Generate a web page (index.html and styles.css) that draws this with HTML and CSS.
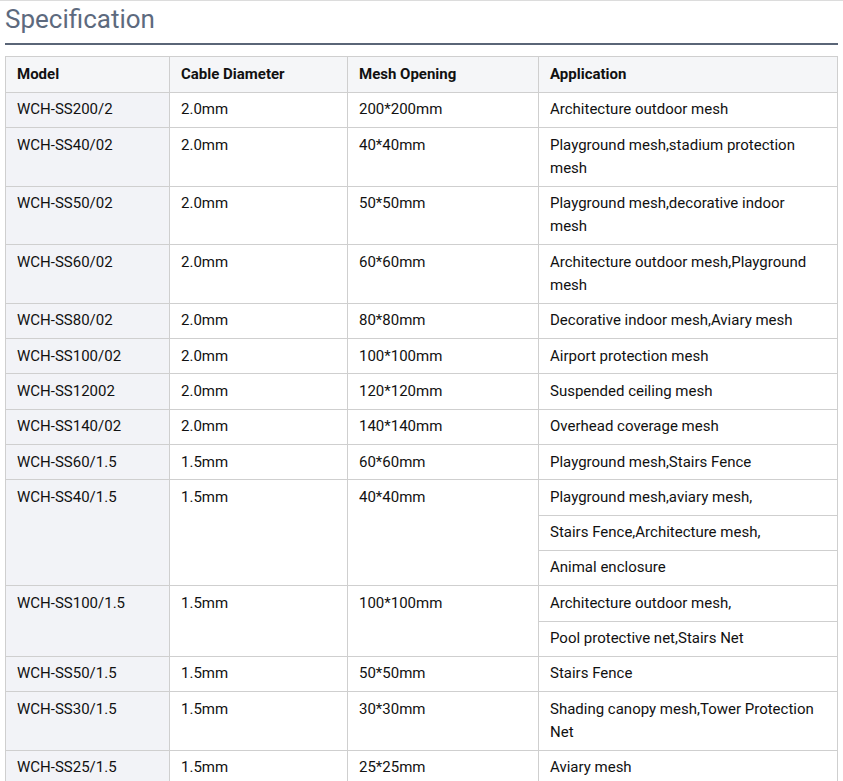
FILE: index.html
```html
<!DOCTYPE html>
<html>
<head>
<meta charset="utf-8">
<link rel="stylesheet" href="styles.css">
</head>
<body>
<div class="page">
  <h2 class="title">Specification</h2>
  <table class="spec">
    <colgroup>
      <col class="c1"><col class="c2"><col class="c3"><col class="c4">
    </colgroup>
    <thead>
      <tr><th>Model</th><th>Cable Diameter</th><th>Mesh Opening</th><th>Application</th></tr>
    </thead>
    <tbody>
      <tr><td class="model">WCH-SS200/2</td><td>2.0mm</td><td>200*200mm</td><td>Architecture outdoor mesh</td></tr>
      <tr><td class="model">WCH-SS40/02</td><td>2.0mm</td><td>40*40mm</td><td>Playground mesh,stadium protection mesh</td></tr>
      <tr><td class="model">WCH-SS50/02</td><td>2.0mm</td><td>50*50mm</td><td>Playground mesh,decorative indoor mesh</td></tr>
      <tr><td class="model">WCH-SS60/02</td><td>2.0mm</td><td>60*60mm</td><td>Architecture outdoor mesh,Playground mesh</td></tr>
      <tr><td class="model">WCH-SS80/02</td><td>2.0mm</td><td>80*80mm</td><td>Decorative indoor mesh,Aviary mesh</td></tr>
      <tr><td class="model">WCH-SS100/02</td><td>2.0mm</td><td>100*100mm</td><td>Airport protection mesh</td></tr>
      <tr><td class="model">WCH-SS12002</td><td>2.0mm</td><td>120*120mm</td><td>Suspended ceiling mesh</td></tr>
      <tr><td class="model">WCH-SS140/02</td><td>2.0mm</td><td>140*140mm</td><td>Overhead coverage mesh</td></tr>
      <tr><td class="model">WCH-SS60/1.5</td><td>1.5mm</td><td>60*60mm</td><td>Playground mesh,Stairs Fence</td></tr>
      <tr><td class="model" rowspan="3">WCH-SS40/1.5</td><td rowspan="3">1.5mm</td><td rowspan="3">40*40mm</td><td>Playground mesh,aviary mesh,</td></tr>
      <tr><td>Stairs Fence,Architecture mesh,</td></tr>
      <tr><td>Animal enclosure</td></tr>
      <tr><td class="model" rowspan="2">WCH-SS100/1.5</td><td rowspan="2">1.5mm</td><td rowspan="2">100*100mm</td><td>Architecture outdoor mesh,</td></tr>
      <tr><td>Pool protective net,Stairs Net</td></tr>
      <tr><td class="model">WCH-SS50/1.5</td><td>1.5mm</td><td>50*50mm</td><td>Stairs Fence</td></tr>
      <tr><td class="model">WCH-SS30/1.5</td><td>1.5mm</td><td>30*30mm</td><td>Shading canopy mesh,Tower Protection Net</td></tr>
      <tr><td class="model">WCH-SS25/1.5</td><td>1.5mm</td><td>25*25mm</td><td>Aviary mesh</td></tr>
    </tbody>
  </table>
</div>
</body>
</html>
```

FILE: styles.css
```css
html, body {
  margin: 0;
  padding: 0;
  background: #ffffff;
}
body {
  font-family: Roboto, "Liberation Sans", Arial, sans-serif;
  color: #111111;
  border-top: 1px solid #dcdcdc;
}
.page {
  padding: 0 5px 0 5px;
}
.title {
  margin: 0;
  font-size: 26px;
  font-weight: 400;
  color: #5d6a7e;
  line-height: 34px;
  padding-top: 1px;
  padding-bottom: 7px;
  border-bottom: 2px solid #5a6577;
  margin-bottom: 11px;
}
.spec {
  width: 832px;
  border-collapse: collapse;
  table-layout: fixed;
  font-size: 15px;
}
.c1 { width: 164px; }
.c2 { width: 178px; }
.c3 { width: 191px; }
.c4 { width: 299px; }
.spec th, .spec td {
  border: 1px solid #cfcfcf;
  padding: 5.5px 16px 5.5px 11px;
  line-height: 23.3px;
  text-align: left;
  vertical-align: top;
}
.spec th {
  background: #f5f6f8;
  font-weight: 700;
  font-size: 15px;
  padding-top: 6px;
  padding-bottom: 5.5px;
}
.spec td.model {
  background: #f2f3f7;
}
```
